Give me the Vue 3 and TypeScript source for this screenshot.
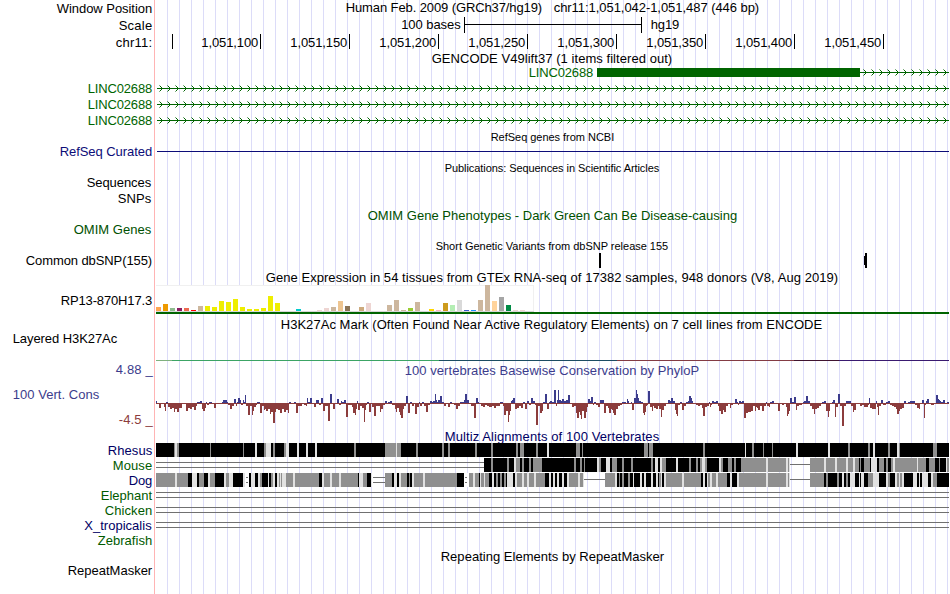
<script setup lang="ts">
type Text = { s: string; x: number; w: number; y: number; c?: string; small?: boolean }
type Row = {
  id: string
  h: number
  labels?: Text[]
  titles?: Text[]
  kind?: string
  strip?: string
}
type Rect = { x: number; y: number; w: number; h: number; c: string }

const NAVY = '#0c0c78'
const GREEN = '#006400'
const OMIM = '#005000'
const CONS = '#3c3c8c'
const RED = '#8c3c3c'
const SPECIES = '#005a00'
const SPECIES_ALT = '#000064'

const lab = (s: string, x: number, end: number, y: number, c?: string): Text => ({ s, x: x + 0.7, w: end - x - 1.5, y, c })
const small = (s: string, x: number, end: number, y: number): Text => ({ ...lab(s, x, end, y), small: true })

const ticks = [172, 260, 349, 438, 527, 616, 705, 794, 883]
const tickLabels: Text[] = ticks.slice(1).map((x, i) => ({
  s: `1,051,${100 + i * 50}`, x: x - 58.7, w: 57, y: 13,
}))

const rhesus =
  'K174 G175 L177 G179 K210 G211 K243 G244 K255 L257 K264 G266 L271 K273 G275 K284 G286 L289 K297 L299 K306 L308 K315 L317 ' +
  'K354 G356 K385 G396 L397 G401 K416 G418 K442 G444 K448 G450 K475 G477 K491 G493 K516 G518 K520 G524 K536 G538 K547 L549 ' +
  'K576 G580 K582 G583 K644 G648 K649 G653 K703 G705 K745 L746 K752 G754 K763 G764 K772 G773 K796 L798 K828 L830 K848 G850 ' +
  'K868 G870 K873 L875 K888 G890 K897 L899 G900 K933 G937 K949'
const mouse =
  'D484 K491 G493 K507 G509 K514 L516 G520 K522 G524 K529 G531 K533 G542 K574 G576 K580 G582 K584 G585 K597 L599 G601 K606 L610 ' +
  'K612 G617 K622 G624 K631 G633 K651 G653 K655 L658 K660 L662 G666 K676 L678 K689 G691 K696 G698 K700 G702 L705 G707 K719 L721 ' +
  'G723 K728 G732 K734 G736 K741 G766 L768 G786 L788 G789 L790 S810 G824 L826 G835 L837 G846 L848 G853 L855 G859 K860 G861 K864 ' +
  'G870 K871 L877 K879 G884 K886 G888 K891 G893 L895 G917 L918 G926 K929 G935 K939 G940 K946 L947 G949'
const dog =
  'G175 L177 G188 K192 L197 K199 G204 K208 L210 G215 K224 L226 G229 L233 K243 L245 W246 D248 W249 K251 L255 K258 L260 G262 K268 ' +
  'L269 K271 G273 L275 K277 L279 G280 L281 G282 L286 G293 L295 G319 K322 L324 G330 L332 G339 L341 G358 K359 L363 G367 K371 L372 W373 ' +
  'D385 G392 K394 L397 K399 L401 G407 K409 G410 K412 L414 G423 L425 G457 K464 W465 D467 W469 G473 L475 G479 K480 L481 G484 L485 ' +
  'G489 K492 L494 K496 G498 K500 G502 K504 G506 K507 L513 K515 L517 G522 L524 G527 L529 G534 L536 G545 K549 L551 ' +
  'K553 L555 K557 L559 K562 L564 K567 L569 G578 L580 G583 L584 S605 G615 L617 K619 G620 K622 G624 K628 G630 K633 L634 K640 L642 ' +
  'K644 L646 K651 L653 K656 L658 K659 G661 L662 K664 L666 G682 L684 G701 K703 L705 K707 L708 G710 L712 G716 L718 G727 K730 L732 ' +
  'K737 L739 G766 L768 G786 L788 G789 L790 S810 G824 K826 G828 K837 G839 K842 L844 K846 G848 K850 L855 K859 L860 K861 L864 K868 ' +
  'G873 L879 K886 L888 G890 K895 L897 G899 L900 G902 L904 K913 L917 K919 L920 K922 L928 K931 L933 G937 K949'

const rows: Row[] = [
  { id: 'position', h: 17, labels: [lab('Window Position', 56, 153, 13)], titles: [lab('Human Feb. 2009 (GRCh37/hg19)', 345, 543, 12), lab('chr11:1,051,042-1,051,487 (446 bp)', 553, 760, 12)] },
  { id: 'scale', h: 17, kind: 'scale', labels: [lab('Scale', 118, 153, 13)], titles: [lab('100 bases', 400.5, 461.5, 12), lab('hg19', 650, 680, 12)] },
  { id: 'ruler', h: 16, kind: 'ruler', labels: [lab('chr11:', 115, 153, 13)], titles: tickLabels },
  { id: 'gencode', h: 15, titles: [lab('GENCODE V49lift37 (1 items filtered out)', 431, 673, 13)] },
  { id: 'linc-1', h: 15, kind: 'exon', titles: [lab('LINC02688', 528, 594, 12, GREEN)] },
  { id: 'linc-2', h: 16, kind: 'intron', labels: [lab('LINC02688', 87, 153, 13, GREEN)] },
  { id: 'linc-3', h: 16, kind: 'intron', labels: [lab('LINC02688', 87, 153, 13, GREEN)] },
  { id: 'linc-4', h: 16, kind: 'intron', labels: [lab('LINC02688', 87, 153, 13, GREEN)] },
  { id: 'refseq-title', h: 16, titles: [small('RefSeq genes from NCBI', 490, 615, 13)] },
  { id: 'refseq', h: 16, kind: 'refseq', labels: [lab('RefSeq Curated', 59, 153, 12, NAVY)] },
  { id: 'pubs', h: 15, titles: [small('Publications: Sequences in Scientific Articles', 444, 660, 12)] },
  { id: 'sequences', h: 16, labels: [lab('Sequences', 86, 152, 12)] },
  { id: 'snps', h: 16, labels: [lab('SNPs', 117, 152, 12)] },
  { id: 'omim-title', h: 15, titles: [lab('OMIM Gene Phenotypes - Dark Green Can Be Disease-causing', 367, 738, 13, OMIM)] },
  { id: 'omim', h: 16, labels: [lab('OMIM Genes', 73, 152, 12, OMIM)] },
  { id: 'dbsnp-title', h: 14, titles: [small('Short Genetic Variants from dbSNP release 155', 435, 669, 12)] },
  { id: 'dbsnp', h: 17, kind: 'dbsnp', labels: [lab('Common dbSNP(155)', 25, 153, 13)] },
  { id: 'gtex-title', h: 16, titles: [lab('Gene Expression in 54 tissues from GTEx RNA-seq of 17382 samples, 948 donors (V8, Aug 2019)', 265, 839, 13)] },
  { id: 'gtex', h: 30, kind: 'gtex', labels: [lab('RP13-870H17.3', 60, 153, 20)] },
  { id: 'h3k-title', h: 16, titles: [lab('H3K27Ac Mark (Often Found Near Active Regulatory Elements) on 7 cell lines from ENCODE', 280, 823, 14)] },
  { id: 'h3k', h: 33, kind: 'h3k', labels: [lab('Layered H3K27Ac', 12, 118, 12)] },
  { id: 'phylop-title', h: 14, labels: [lab('4.88 _', 115, 153.5, 10, CONS)], titles: [lab('100 vertebrates Basewise Conservation by PhyloP', 404, 700, 11, CONS)] },
  { id: 'phylop', h: 53, kind: 'phylop', labels: [lab('100 Vert. Cons', 12, 100, 21, CONS), lab('-4.5 _', 118, 153.5, 46, RED)] },
  { id: 'multiz', h: 12, titles: [lab('Multiz Alignments of 100 Vertebrates', 444, 660, 10, SPECIES_ALT)] },
  { id: 'rhesus', h: 15, kind: 'strip', strip: rhesus, labels: [lab('Rhesus', 107, 153, 12, SPECIES_ALT)] },
  { id: 'mouse', h: 15, kind: 'strip', strip: mouse, labels: [lab('Mouse', 112, 153, 12, SPECIES)] },
  { id: 'dog', h: 15, kind: 'strip', strip: dog, labels: [lab('Dog', 128, 153, 12, SPECIES_ALT)] },
  { id: 'elephant', h: 15, kind: 'strip', strip: 'D949', labels: [lab('Elephant', 100, 153, 12, SPECIES)] },
  { id: 'chicken', h: 15, kind: 'strip', strip: 'D949', labels: [lab('Chicken', 104, 153, 12, SPECIES)] },
  { id: 'tropicalis', h: 15, kind: 'strip', strip: 'D949', labels: [lab('X_tropicalis', 83.5, 152.5, 12, SPECIES_ALT)] },
  { id: 'zebrafish', h: 15, labels: [lab('Zebrafish', 97, 153, 12, SPECIES)] },
  { id: 'rmsk-title', h: 15, titles: [lab('Repeating Elements by RepeatMasker', 440, 665, 13)] },
  { id: 'rmsk', h: 31, labels: [lab('RepeatMasker', 67, 153, 12)] },
]

/* Strand arrows every 8px, tip on the centre line. */
function chevrons(from: number, y: number): string {
  let d = ''
  for (let x = 162; x < 949; x += 8) {
    if (x < from + 3) continue
    d += `M${x - 2} ${y - 2}h1v1h-1zM${x - 1} ${y - 1}h1v1h-1zM${x} ${y}h1v1h-1zM${x - 1} ${y + 1}h1v1h-1zM${x - 2} ${y + 2}h1v1h-1z`
  }
  return d
}
function chevronTails(from: number, y: number): string {
  let d = ''
  for (let x = 162; x < 949; x += 8) {
    if (x < from + 3) continue
    d += `M${x - 3} ${y - 3}h1v1h-1zM${x - 3} ${y + 3}h1v1h-1z`
  }
  return d
}

/* Median expression per tissue: bar height and tissue colour. */
const Y = '#eeee00', T = '#cdb79e', P = '#eed5d2'
const tissues: [number, string][] = [
  [4, '#ffa54f'], [7, '#ee9a00'], [3, '#8fbc8f'], [3, '#8b1c62'], [3, '#ee6a50'], [1, '#ff0000'], [5, T],
  [5, Y], [4, Y], [10, Y], [9, Y], [12, Y], [4, Y], [2, Y], [2, Y], [3, Y], [15, Y], [8, Y], [0, Y], [0, Y],
  [2, '#00cdcd'], [0, P], [0, P], [1, P], [3, P], [4, T], [10, '#eec591'], [5, '#8b7355'], [0, T],
  [4, '#cdaa7d'], [8, P], [0, P], [0, P], [6, T], [11, T], [1, T], [3, '#9acd32'], [9, T], [0, T],
  [2, '#ffd700'], [1, '#ffb6c1'], [8, '#cd9b1d'], [6, '#b4eeb4'], [11, '#d9d9d9'], [1, '#3a5fcd'],
  [1, '#1e90ff'], [11, T], [26, T], [10, '#ffd39b'], [14, '#a6a6a6'], [6, '#008b45'], [1, P], [1, P], [0, P],
]
const gtexBars: Rect[] = tissues.map(([h, c], i) => ({ x: 156 + i * 7, y: 26 - h, w: 5, h, c }))

const h3k: Rect[] = [
  [156, 172, '#7fb07f'], [172, 439, '#3ca465'], [439, 617, '#1c4c62'],
  [617, 794, '#843c44'], [794, 839, '#401430'], [839, 949, '#3a1a70'],
].map(([a, b, c]) => ({ x: a as number, y: 29, w: (b as number) - (a as number), h: 1, c: c as string }))

/* Conservation profile: "start score" pairs, each running to the next start. */
const profile = [
  '156 2,157 -1,159 -5,161 -1,164 -4,165 -8,166 1,168 -4,170 -6,172 -5,174 -9,175 -6,177 -9,179 -5,182 -1,186 -8,188 -5,190 -6,192 -4,194 -7,196 -3,197 1,200 2,202 -6,203 -8,205 -5,206 1,207 -2,209 1,212 -1,214 -5,216 -1,222 1,223 3,227 1,228 -2,230 -6,232 -3,234 4,236 -3,237 1,238 5,240 3,241 -2,243 3,244 1,245 8,246 -3,248 -12,250 -3,252 -12,253 -8,254 -4,256 -2,257 1,260 -10,262 -3,264 -7,265 -6,266 -8,268 -6,270 -11,271 -9,273 -20,275 -9,276 -6,278 -7,280 -10,282 -6,284 -9,286 -7,288 -10,289 1,291 -1,294 1,296 -10,298 -3,302 -1,304 -2,306 -3,307 5,308 1,310 5,312 -1,314 -4,316 3,319 -2,321 5,323 -8,325 -3,328 -18,330 9,332 -1,333 -6,335 -1,337 4,339 -2,341 2,342 1,344 3,346 -14,348 -2',
  '350 -2,352 -4,353 -10,355 -12,356 -6,357 2,358 -7,360 -3,362 -5,364 -19,365 -7,366 -2,367 1,369 -9,371 -1,372 -4,374 -13,376 -3,380 -9,381 -6,383 -2,385 2,387 -1,388 1,390 2,392 -2,395 -6,396 -9,397 -5,399 -9,400 -12,401 -15,403 -6,404 -3,406 7,408 -10,410 1,412 -3,414 -1,415 -11,417 -4,419 1,420 -3,422 1,424 -3,426 -9,428 -2,430 2,432 1,433 2,435 9,436 3,437 1,438 3,440 7,442 1,444 -3,446 -1,448 -4,450 1,452 -1,454 -2,456 -6,458 -3,460 1,464 3,465 9,467 3,469 -1,471 -3,474 -15,476 5,478 1,479 -1,481 -3,483 -4,485 -2,487 -3,489 -4,492 -3,494 -5,496 -3,500 1,503 -3,504 -12,506 -8,508 -19,509 -12,510 -8,511 2,512 3,513 5,515 -6,517 -5,519 -3,521 -5,523 1,525 -6,527 2,529 -2,531 5,533 2,535 -2,536 -22,538 -3,540 -10,542 -8,543 1,545 9,547 -6,549 1',
  '550 2,552 1,554 13,556 -3,557 3,558 13,559 3,561 2,562 4,564 2,566 3,568 8,570 -1,572 -4,574 -3,576 -10,577 -15,579 -9,580 -12,581 -16,582 -8,584 -15,586 -9,587 -4,588 4,590 2,591 6,593 -2,594 1,596 -2,598 -4,600 3,604 -10,606 -3,608 -5,609 -10,611 -6,612 -7,613 -10,614 -12,616 -6,618 -3,620 -2,622 1,626 -1,627 4,628 2,629 -1,631 1,632 -7,634 5,636 13,637 9,638 5,639 2,641 1,643 -10,644 -12,645 -9,646 -3,647 -2,648 12,650 -4,652 -8,653 -3,654 -5,656 -6,658 -3,659 -6,661 -14,662 -7,664 -3,666 -1,668 3,670 2,671 5,673 2,675 -7,676 -11,677 -13,678 -2,680 1,682 -7,684 -3,686 1,688 2,689 7,691 5,692 2,693 -1,696 -2,698 -3,700 -2,702 -5,703 -13,705 -4,707 -3,709 1,710 -4,711 -2,712 2,714 1,716 2,718 -3,719 -8,721 -11,723 -7,724 -9,726 -3,728 -1,730 -5,731 -2,733 -1,735 4,737 1,738 -2,739 2,741 1,742 2,744 -15,746 -10,748 -9',
  '750 -9,751 -8,753 -3,755 -8,756 -4,757 -5,758 -7,760 -3,762 -8,764 -3,766 1,767 -3,769 -4,770 1,772 2,774 -1,778 -8,780 -1,782 -2,784 -1,786 -4,787 -13,788 -11,789 -8,790 5,792 1,794 6,796 -7,797 -3,799 -2,802 -1,803 1,804 2,806 7,808 2,810 -3,812 -6,814 -11,815 -6,817 -5,819 -3,821 -1,822 1,824 2,826 -8,828 -14,829 -8,830 -1,832 1,833 3,835 -14,836 -4,838 9,840 -3,842 -23,844 -3,846 2,851 -3,853 -9,854 -7,856 -1,860 -3,862 -2,864 -4,868 -2,869 5,870 -5,872 -6,876 2,877 -4,878 -12,879 -3,881 3,883 -2,886 1,888 2,890 -2,892 -3,894 -4,896 -6,897 -11,899 -8,900 -6,902 -5,904 2,906 -1,908 1,910 2,915 -2,917 -5,919 -6,920 -1,922 3,924 -15,925 -2,926 2,927 4,929 -1,931 -2,934 -1,936 8,938 4,939 3,940 2,941 1,943 3,945 -1,947 1,949 0',
].join(',').split(',').map(p => p.split(' ').map(Number))
const phylop: Rect[] = profile.slice(0, -1).map(([x, v], i) => ({
  x, w: profile[i + 1][0] - x, h: Math.abs(v), y: v > 0 ? 25 - v : 25, c: v > 0 ? CONS : RED,
}))

/* Alignment strip: code + end column. K/G/L shades, D double gap line, S single gap line, W blank. */
const shades: Record<string, string> = { K: '#000000', G: '#8f8f8f', L: '#e1e1e1', W: '#ffffff' }
function stripRects(src: string): Rect[] {
  const out: Rect[] = []
  let x = 156
  for (const token of src.split(' ')) {
    const end = Number(token.slice(1))
    const w = end - x
    const code = token[0]
    if (code === 'D') out.push({ x, y: 4, w, h: 1, c: '#707070' }, { x, y: 9, w, h: 1, c: '#707070' })
    else if (code === 'S') out.push({ x, y: 6, w, h: 1, c: '#707070' })
    else out.push({ x, y: 0, w, h: 14, c: shades[code] })
    x = end
  }
  return out
}

function rects(row: Row): Rect[] {
  switch (row.kind) {
    case 'scale':
      return [{ x: 464, y: 0, w: 1, h: 16, c: '#000' }, { x: 464, y: 7, w: 178, h: 1, c: '#000' }, { x: 641, y: 0, w: 1, h: 16, c: '#000' }]
    case 'ruler':
      return ticks.map(x => ({ x, y: 0, w: 1, h: 15, c: '#000' }))
    case 'exon':
      return [{ x: 597, y: 3, w: 263, h: 9, c: GREEN }, { x: 860, y: 7, w: 89, h: 1, c: GREEN }]
    case 'intron':
      return [{ x: 157, y: 8, w: 792, h: 1, c: GREEN }]
    case 'refseq':
      return [{ x: 157, y: 7, w: 792, h: 1, c: NAVY }]
    case 'dbsnp':
      return [{ x: 599, y: 1, w: 2, h: 15, c: '#000' }, { x: 864, y: 4, w: 1, h: 9, c: '#000' }, { x: 865, y: 1, w: 2, h: 15, c: '#000' }]
    case 'gtex':
      return [
        { x: 156, y: 0, w: 378, h: 27, c: '#f0f0f0' }, { x: 156, y: 1, w: 377, h: 25, c: '#fff' },
        { x: 156, y: 26, w: 378, h: 1, c: '#d8d8d8' }, ...gtexBars, { x: 156, y: 27, w: 793, h: 2, c: GREEN },
      ]
    case 'h3k':
      return h3k
    case 'phylop':
      return [{ x: 156, y: 25, w: 793, h: 1, c: RED }, ...phylop]
    case 'strip':
      return stripRects(row.strip ?? '')
    default:
      return []
  }
}
</script>

<template>
  <main class="browser">
    <section v-for="row in rows" :key="row.id" class="row">
      <svg class="side" width="155" :height="row.h">
        <text v-for="t in row.labels" :key="t.s" :x="t.x" :y="t.y" :textLength="t.w" :fill="t.c ?? '#000'">{{ t.s }}</text>
      </svg>
      <svg class="plot" width="794" :height="row.h" :viewBox="`155 0 794 ${row.h}`">
        <g class="shapes">
          <rect v-for="(r, i) in rects(row)" :key="i" :x="r.x" :y="r.y" :width="r.w" :height="r.h" :fill="r.c" />
          <template v-if="row.kind === 'intron' || row.kind === 'exon'">
            <path class="arrow" :d="chevrons(row.kind === 'exon' ? 860 : 156, row.kind === 'exon' ? 7 : 8)" />
            <path class="arrow tail" :d="chevronTails(row.kind === 'exon' ? 860 : 156, row.kind === 'exon' ? 7 : 8)" />
          </template>
        </g>
        <text
          v-for="t in row.titles" :key="t.s" :class="{ small: t.small }"
          :x="t.x" :y="t.y" :textLength="t.w" :fill="t.c ?? '#000'"
        >{{ t.s }}</text>
      </svg>
    </section>
  </main>
</template>

<style>
body {
  margin: 0;
  background: #fff;
}
</style>

<style scoped>
.browser {
  width: 949px;
  height: 594px;
  display: flex;
  flex-direction: column;
  background-image:
    linear-gradient(#ffb4b4, #ffb4b4),
    repeating-linear-gradient(to right, #dcdcf8 0, #dcdcf8 1px, transparent 1px, transparent 12px);
  background-size: 1px 100%, 782px 100%;
  background-position: 154px 0, 167px 0;
  background-repeat: no-repeat;
  font-family: "Liberation Sans", Arial, sans-serif;
  font-size: 13px;
}
.row {
  display: flex;
}
.side,
.plot {
  display: block;
  flex: none;
  overflow: visible;
}
.small {
  font-size: 11px;
}
.shapes {
  shape-rendering: crispEdges;
}
.arrow {
  fill: #006400;
}
.tail {
  opacity: 0.5;
}
</style>
